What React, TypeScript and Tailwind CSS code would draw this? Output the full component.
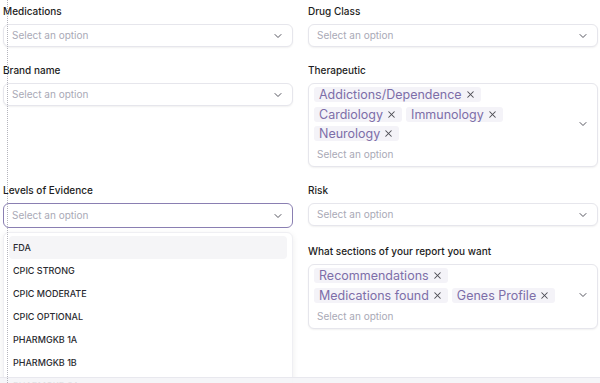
import { ChevronDown, X } from "lucide-react";

const LEVELS = ["FDA", "CPIC STRONG", "CPIC MODERATE", "CPIC OPTIONAL", "PHARMGKB 1A", "PHARMGKB 1B", "PHARMGKB 2A"];

function Label({ children }: { children: React.ReactNode }) {
  return <p className="text-[10px] leading-[14px] font-medium text-[#1d1d22]">{children}</p>;
}

function Select({ focused = false }: { focused?: boolean }) {
  return (
    <div
      className={`flex items-center justify-between h-[23px] pl-[8px] pr-[8px] rounded-[6px] bg-white ${
        focused ? "h-[25px] border-[1.5px] border-[#8a7fb2]" : "border border-[#e6e6ec] shadow-[0_1px_2px_rgba(0,0,0,0.06)]"
      }`}
    >
      <span className="text-[10px] text-[#a9a9b6]">Select an option</span>
      <ChevronDown size={12} strokeWidth={2} className="text-[#55555f]" />
    </div>
  );
}

function Chip({ label }: { label: string }) {
  return (
    <span className="inline-flex items-center gap-[3px] h-[15px] px-[5px] rounded-[3px] bg-[#f4f3f8] text-[12.5px] leading-[15px] text-[#7d6ea8]">
      {label}
      <X size={11} strokeWidth={2.2} className="text-[#4a4a52]" />
    </span>
  );
}

function MultiSelect({ rows }: { rows: string[][] }) {
  return (
    <div className="flex items-center justify-between pl-[5px] pr-[8px] pt-[3px] pb-[5px] rounded-[6px] border border-[#e6e6ec] bg-white shadow-[0_1px_2px_rgba(0,0,0,0.06)]">
      <div className="flex flex-col gap-[4.5px]">
        {rows.map((row, i) => (
          <div key={i} className="flex gap-[4px]">
            {row.map((c) => (
              <Chip key={c} label={c} />
            ))}
          </div>
        ))}
        <span className="mt-[1.5px] pl-[3px] text-[10px] leading-[14px] text-[#a9a9b6]">Select an option</span>
      </div>
      <ChevronDown size={12} strokeWidth={2} className="text-[#55555f]" />
    </div>
  );
}

export default function App() {
  return (
    <div className="relative w-[600px] h-[383px] overflow-hidden bg-white flex flex-col" style={{ fontFamily: "Inter, 'Noto Sans', sans-serif" }}>
      <div className="grid grid-cols-2 gap-x-[15px] gap-y-[16px] pl-[3px] pr-[2px] pt-[4px]">
        <div className="flex flex-col gap-[6px]">
          <Label>Medications</Label>
          <Select />
        </div>
        <div className="flex flex-col gap-[6px]">
          <Label>Drug Class</Label>
          <Select />
        </div>

        <div className="flex flex-col gap-[6px]">
          <Label>Brand name</Label>
          <Select />
        </div>
        <div className="flex flex-col gap-[6px]">
          <Label>Therapeutic</Label>
          <MultiSelect rows={[["Addictions/Dependence"], ["Cardiology", "Immunology"], ["Neurology"]]} />
        </div>

        <div className="relative flex flex-col gap-[6px]">
          <Label>Levels of Evidence</Label>
          <Select focused />
          <div className="absolute z-10 left-0 right-0 top-[49px] h-[200px] px-[5px] py-[3px] bg-white rounded-[6px] border border-[#efeff3] shadow-[0_2px_6px_rgba(0,0,0,0.08)]">
            {LEVELS.map((l, i) => (
              <div
                key={l}
                className={`h-[23px] flex items-center pl-[4px] rounded-[4px] text-[9px] font-medium text-[#2a2a30] ${i === 0 ? "bg-[#f5f5f7]" : ""}`}
              >
                {l}
              </div>
            ))}
          </div>
        </div>
        <div className="flex flex-col gap-[6px]">
          <Label>Risk</Label>
          <Select />
        </div>

        <div />
        <div className="flex flex-col gap-[6px]">
          <Label>What sections of your report you want</Label>
          <MultiSelect rows={[["Recommendations"], ["Medications found", "Genes Profile"]]} />
        </div>
      </div>

      <div className="flex-1" />
      <div className="relative z-20 h-[6px] border-t border-[#e8e8ee] bg-[#f4f4f7]/90" />

      {/* dotted guide line */}
      <div className="absolute z-30 left-[7px] top-0 bottom-0 border-l border-dotted border-[#b4b4bc]" />
    </div>
  );
}
